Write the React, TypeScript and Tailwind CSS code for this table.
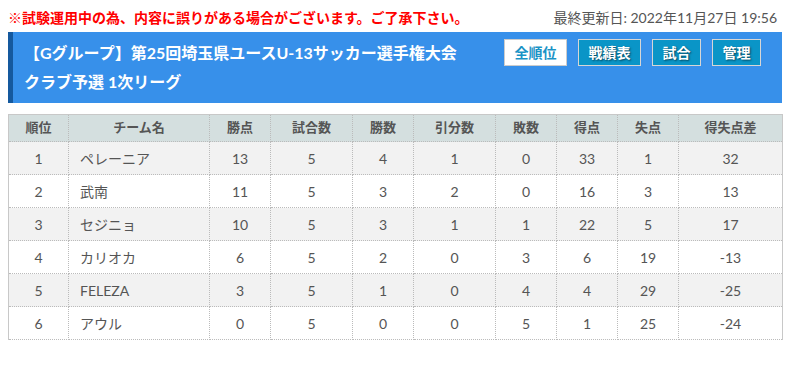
import React from 'react';

type Row = {
  rank: number;
  team: string;
  pts: number;
  played: number;
  win: number;
  draw: number;
  lose: number;
  gf: number;
  ga: number;
  gd: number;
};

const rows: Row[] = [
  { rank: 1, team: 'ペレーニア', pts: 13, played: 5, win: 4, draw: 1, lose: 0, gf: 33, ga: 1, gd: 32 },
  { rank: 2, team: '武南', pts: 11, played: 5, win: 3, draw: 2, lose: 0, gf: 16, ga: 3, gd: 13 },
  { rank: 3, team: 'セジニョ', pts: 10, played: 5, win: 3, draw: 1, lose: 1, gf: 22, ga: 5, gd: 17 },
  { rank: 4, team: 'カリオカ', pts: 6, played: 5, win: 2, draw: 0, lose: 3, gf: 6, ga: 19, gd: -13 },
  { rank: 5, team: 'FELEZA', pts: 3, played: 5, win: 1, draw: 0, lose: 4, gf: 4, ga: 29, gd: -25 },
  { rank: 6, team: 'アウル', pts: 0, played: 5, win: 0, draw: 0, lose: 5, gf: 1, ga: 25, gd: -24 },
];

const heads = ['順位', 'チーム名', '勝点', '試合数', '勝数', '引分数', '敗数', '得点', '失点', '得失点差'];
const widths = ['w-[60px]', 'w-[141px]', 'w-[61px]', 'w-[82px]', 'w-[61px]', 'w-[82px]', 'w-[61px]', 'w-[61px]', 'w-[61px]', 'w-[104px]'];

const navs = ['戦績表', '試合', '管理'];

export default function App() {
  return (
    <div className="min-h-[367px] bg-white pl-[8px] pr-[9px] font-['Lato','Noto_Sans_CJK_JP',sans-serif] text-[#555]">
      <div className="flex h-[32px] items-center justify-between pt-[2px]">
        <p className="text-[14px] font-bold text-[#f00]">※試験運用中の為、内容に誤りがある場合がございます。ご了承下さい。</p>
        <p className="pr-[5px] text-[14px] text-[#555]">最終更新日: 2022年11月27日 19:56</p>
      </div>

      <div className="flex h-[71px] border-l-[5px] border-[#15599e] bg-[#3790ea] pl-[11px] pr-[21px]">
        <h1 className="flex-1 pt-[6px] text-[16px] font-bold leading-[29px] text-white">
          【Gグループ】第25回埼玉県ユースU-13サッカー選手権大会
          <br />
          クラブ予選 1次リーグ
        </h1>
        <div className="flex gap-[11px] pt-[7px]">
          <button
            type="button"
            className="h-[27px] w-[63px] border border-[#ccc] bg-white text-[14px] font-bold text-[#1a93c6]"
          >
            全順位
          </button>
          {navs.map((n) => (
            <button
              key={n}
              type="button"
              className={`h-[27px] border border-[#d6d6d6] bg-[#0a95c7] text-[14px] font-bold text-white [text-shadow:1px_1px_2px_rgba(0,0,0,0.55)] ${n === '戦績表' ? 'w-[63px]' : 'w-[49px]'}`}
            >
              {n}
            </button>
          ))}
        </div>
      </div>

      <table className="mt-[11px] w-[774px] table-fixed border-collapse border-x border-t border-[#c8c8c8] text-[14px]">
        <thead>
          <tr className="h-[27px] bg-[#d4dfdf]">
            {heads.map((h, i) => (
              <th
                key={h}
                className={`${widths[i]} border-x border-b border-dotted border-[#bbb] text-center text-[13px] font-bold text-[#555]`}
              >
                {h}
              </th>
            ))}
          </tr>
        </thead>
        <tbody>
          {rows.map((r, idx) => {
            const cells = [r.rank, r.team, r.pts, r.played, r.win, r.draw, r.lose, r.gf, r.ga, r.gd];
            return (
              <tr key={r.rank} className={`h-[33px] ${idx % 2 === 0 ? 'bg-[#f2f2f2]' : 'bg-white'}`}>
                {cells.map((c, i) => (
                  <td
                    key={i}
                    className={`border border-dotted border-[#bbb] ${i === 1 ? 'pl-[11px] text-left' : 'text-center'}`}
                  >
                    {c}
                  </td>
                ))}
              </tr>
            );
          })}
        </tbody>
      </table>
    </div>
  );
}
